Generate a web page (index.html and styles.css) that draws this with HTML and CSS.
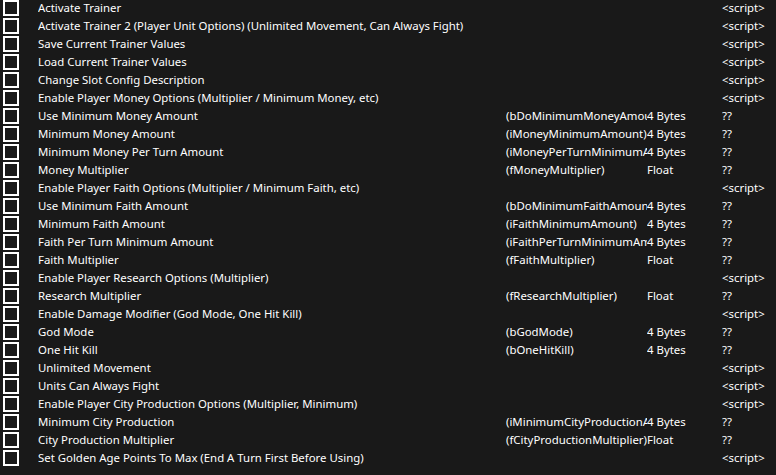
FILE: index.html
```html
<!DOCTYPE html>
<html>
<head>
<meta charset="utf-8">
<link rel="stylesheet" href="styles.css">
</head>
<body>
<div class="table">
  <div class="row"><span class="cb"></span><span class="desc">Activate Trainer</span><span class="addr"></span><span class="type"></span><span class="val">&lt;script&gt;</span></div>
  <div class="row"><span class="cb"></span><span class="desc">Activate Trainer 2 (Player Unit Options) (Unlimited Movement, Can Always Fight)</span><span class="addr"></span><span class="type"></span><span class="val">&lt;script&gt;</span></div>
  <div class="row"><span class="cb"></span><span class="desc">Save Current Trainer Values</span><span class="addr"></span><span class="type"></span><span class="val">&lt;script&gt;</span></div>
  <div class="row"><span class="cb"></span><span class="desc">Load Current Trainer Values</span><span class="addr"></span><span class="type"></span><span class="val">&lt;script&gt;</span></div>
  <div class="row"><span class="cb"></span><span class="desc">Change Slot Config Description</span><span class="addr"></span><span class="type"></span><span class="val">&lt;script&gt;</span></div>
  <div class="row"><span class="cb"></span><span class="desc">Enable Player Money Options (Multiplier / Minimum Money, etc)</span><span class="addr"></span><span class="type"></span><span class="val">&lt;script&gt;</span></div>
  <div class="row"><span class="cb"></span><span class="desc">Use Minimum Money Amount</span><span class="addr">(bDoMinimumMoneyAmount)</span><span class="type">4 Bytes</span><span class="val">??</span></div>
  <div class="row"><span class="cb"></span><span class="desc">Minimum Money Amount</span><span class="addr">(iMoneyMinimumAmount)</span><span class="type">4 Bytes</span><span class="val">??</span></div>
  <div class="row"><span class="cb"></span><span class="desc">Minimum Money Per Turn Amount</span><span class="addr">(iMoneyPerTurnMinimumAmount)</span><span class="type">4 Bytes</span><span class="val">??</span></div>
  <div class="row"><span class="cb"></span><span class="desc">Money Multiplier</span><span class="addr">(fMoneyMultiplier)</span><span class="type">Float</span><span class="val">??</span></div>
  <div class="row"><span class="cb"></span><span class="desc">Enable Player Faith Options (Multiplier / Minimum Faith, etc)</span><span class="addr"></span><span class="type"></span><span class="val">&lt;script&gt;</span></div>
  <div class="row"><span class="cb"></span><span class="desc">Use Minimum Faith Amount</span><span class="addr">(bDoMinimumFaithAmount)</span><span class="type">4 Bytes</span><span class="val">??</span></div>
  <div class="row"><span class="cb"></span><span class="desc">Minimum Faith Amount</span><span class="addr">(iFaithMinimumAmount)</span><span class="type">4 Bytes</span><span class="val">??</span></div>
  <div class="row"><span class="cb"></span><span class="desc">Faith Per Turn Minimum Amount</span><span class="addr">(iFaithPerTurnMinimumAmount)</span><span class="type">4 Bytes</span><span class="val">??</span></div>
  <div class="row"><span class="cb"></span><span class="desc">Faith Multiplier</span><span class="addr">(fFaithMultiplier)</span><span class="type">Float</span><span class="val">??</span></div>
  <div class="row"><span class="cb"></span><span class="desc">Enable Player Research Options (Multiplier)</span><span class="addr"></span><span class="type"></span><span class="val">&lt;script&gt;</span></div>
  <div class="row"><span class="cb"></span><span class="desc">Research Multiplier</span><span class="addr">(fResearchMultiplier)</span><span class="type">Float</span><span class="val">??</span></div>
  <div class="row"><span class="cb"></span><span class="desc">Enable Damage Modifier (God Mode, One Hit Kill)</span><span class="addr"></span><span class="type"></span><span class="val">&lt;script&gt;</span></div>
  <div class="row"><span class="cb"></span><span class="desc">God Mode</span><span class="addr">(bGodMode)</span><span class="type">4 Bytes</span><span class="val">??</span></div>
  <div class="row"><span class="cb"></span><span class="desc">One Hit Kill</span><span class="addr">(bOneHitKill)</span><span class="type">4 Bytes</span><span class="val">??</span></div>
  <div class="row"><span class="cb"></span><span class="desc">Unlimited Movement</span><span class="addr"></span><span class="type"></span><span class="val">&lt;script&gt;</span></div>
  <div class="row"><span class="cb"></span><span class="desc">Units Can Always Fight</span><span class="addr"></span><span class="type"></span><span class="val">&lt;script&gt;</span></div>
  <div class="row"><span class="cb"></span><span class="desc">Enable Player City Production Options (Multiplier, Minimum)</span><span class="addr"></span><span class="type"></span><span class="val">&lt;script&gt;</span></div>
  <div class="row"><span class="cb"></span><span class="desc">Minimum City Production</span><span class="addr">(iMinimumCityProductionAmount)</span><span class="type">4 Bytes</span><span class="val">??</span></div>
  <div class="row"><span class="cb"></span><span class="desc">City Production Multiplier</span><span class="addr">(fCityProductionMultiplier)</span><span class="type">Float</span><span class="val">??</span></div>
  <div class="row"><span class="cb"></span><span class="desc">Set Golden Age Points To Max (End A Turn First Before Using)</span><span class="addr"></span><span class="type"></span><span class="val">&lt;script&gt;</span></div>
</div>
</body>
</html>
```

FILE: styles.css
```css
html, body {
  margin: 0;
  padding: 0;
  background: #191919;
}
body {
  width: 776px;
  height: 475px;
  overflow: hidden;
  font-family: "Noto Sans", "Open Sans", sans-serif;
  font-size: 11.4px;
  color: #ffffff;
}
.table {
  display: flex;
  flex-direction: column;
}
.row {
  display: grid;
  grid-template-columns: 38px 468px 141px 75px 1fr;
  height: 18px;
  align-items: center;
  white-space: nowrap;
}
.row > span {
  overflow: hidden;
  line-height: 16px;
  height: 18px;
}
.addr {
  padding-right: 1px;
  box-sizing: border-box;
}
.cb {
  box-sizing: border-box;
  width: 16px;
  height: 16px !important;
  margin-left: 3px;
  align-self: start;
  border: 2px solid #ffffff;
  background: #191919;
}
.desc, .addr, .type, .val {
  display: block;
}
```
